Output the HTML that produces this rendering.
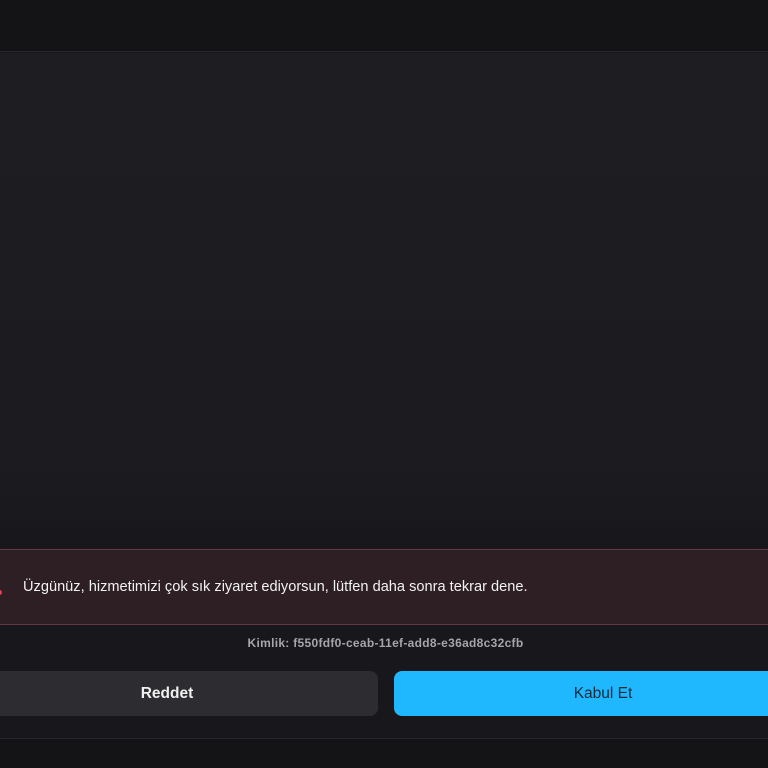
<!DOCTYPE html>
<html><head><meta charset="utf-8"><style>
*{margin:0;padding:0;box-sizing:border-box}
body{width:768px;height:768px;overflow:hidden;background:#18181c;font-family:"Liberation Sans",sans-serif;position:relative}
.top{position:absolute;left:0;top:0;width:768px;height:52px;background:#141416;border-bottom:1px solid #26262b}
.main{position:absolute;left:0;top:53px;width:768px;height:474px;background:linear-gradient(#1e1e22,#1c1c20 85%,#19191d)}
.err{position:absolute;left:-10px;top:549px;width:790px;height:76px;background:#2d1f24;border:1px solid #6a3843;border-radius:4px}
.err span{position:absolute;left:32px;top:29px;color:#f2f2f2;font-size:14.6px}
.dot{position:absolute;left:-3px;top:590px;width:5px;height:5px;border-radius:50%;background:#e0405a}
.id{position:absolute;top:636px;left:0;width:771px;text-align:center;color:#a5a5aa;font-size:12px;font-weight:bold;letter-spacing:0.3px}
.btn{position:absolute;top:671px;height:45px;border-radius:8px;display:flex;align-items:center;justify-content:center;font-size:15.5px}
.r{left:-44px;width:422px;background:#2c2c31;color:#f0f0f0;font-weight:bold}
.k{left:394px;width:418px;background:#1fb8ff;color:#0f2a3a}
.bot{position:absolute;left:0;top:738px;width:768px;height:30px;background:#141416;border-top:1px solid #26262b}
</style></head><body>
<div class="top"></div>
<div class="main"></div>
<div class="err"><span>Üzgünüz, hizmetimizi çok sık ziyaret ediyorsun, lütfen daha sonra tekrar dene.</span></div>
<div class="dot"></div>
<div class="id">Kimlik: f550fdf0-ceab-11ef-add8-e36ad8c32cfb</div>
<div class="btn r">Reddet</div>
<div class="btn k">Kabul Et</div>
<div class="bot"></div>
</body></html>
